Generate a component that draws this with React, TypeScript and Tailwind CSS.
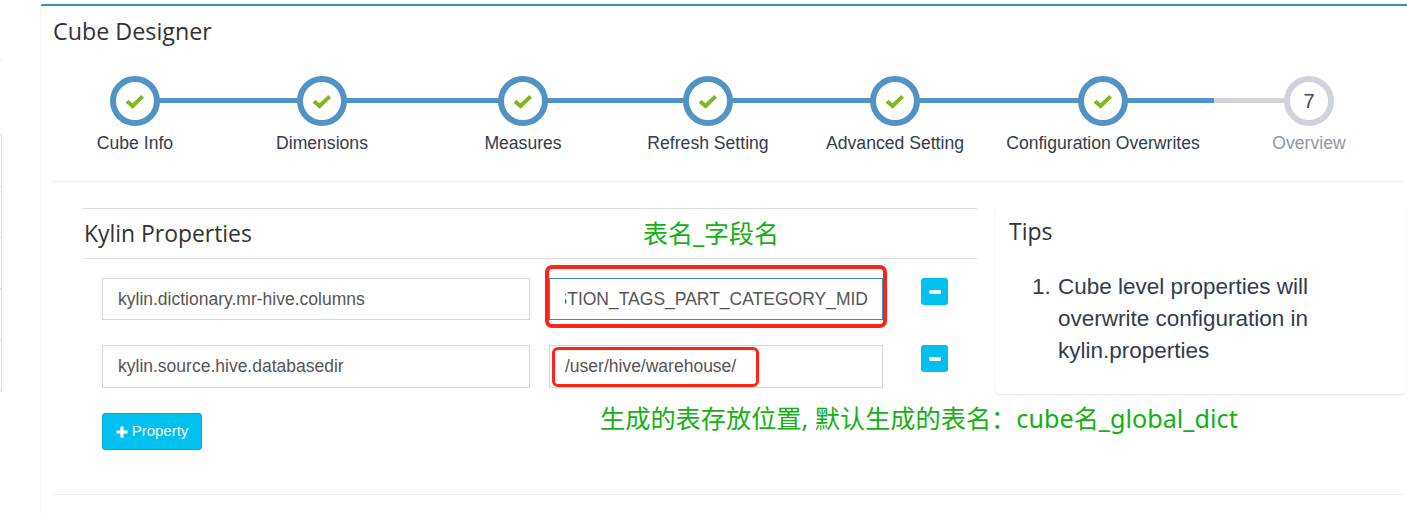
import React from "react";

const arial = "font-['Liberation_Sans',Arial,sans-serif]";
const heading = "font-['Open_Sans','Noto_Sans',sans-serif]";
const cjk = "font-['Noto_Sans','Noto_Sans_CJK_SC',sans-serif]";

const steps = [
  { label: "Cube Info", width: "w-[188px]" },
  { label: "Dimensions", width: "w-[186px]" },
  { label: "Measures", width: "w-[216px]" },
  { label: "Refresh Setting", width: "w-[154px]" },
  { label: "Advanced Setting", width: "w-[220px]" },
  { label: "Configuration Overwrites", width: "w-[196px]" },
];

const CheckMark = () => (
  <svg width="20" height="16" viewBox="0 0 20 16">
    <path d="M2 8.2 L7.6 13 L17.6 3.4" fill="none" stroke="#7fb71e" strokeWidth="4" />
  </svg>
);

const Step = ({ label, width }: { label: string; width: string }) => (
  <div className={`${width} shrink-0 flex flex-col items-center relative`}>
    <div className="w-[50px] h-[50px] rounded-full border-[6px] border-[#5093c4] bg-white flex items-center justify-center">
      <CheckMark />
    </div>
    <div className={`mt-[5px] h-[24px] leading-[24px] text-[17.6px] whitespace-nowrap text-[#333c4e] ${arial}`}>{label}</div>
  </div>
);

const MinusButton = () => (
  <button className="w-[27px] h-[27px] rounded-[3px] bg-[#00c0ef] flex items-center justify-center shrink-0">
    <span className="block w-[12px] h-[4px] rounded-[1px] bg-white" />
  </button>
);

export default function App() {
  return (
    <div className="relative flex w-[1407px] h-[514px] overflow-hidden bg-white">
      {/* what is left of the sidebar table */}
      <div className="w-[40px] shrink-0">
        <div className="w-[2px] mt-[59px] h-px bg-[#eeeeee]" />
        <div className="w-[2px] mt-[74px] h-[258px] border-r border-[#dddddd] flex flex-col">
          <div className="h-[52px] border-t border-[#dddddd]" />
          <div className="h-[51px] border-t border-[#dddddd]" />
          <div className="h-[51px] border-t border-[#dddddd]" />
          <div className="h-[51px] border-t border-[#dddddd]" />
          <div className="h-[52px] border-t border-b border-[#dddddd]" />
        </div>
      </div>

      <div className="flex-1 mt-[4px] border-t-2 border-l border-t-[#3c8dbc] border-l-[#f4f4f4] rounded-tl-[3px] min-w-0">
        <h1 className={`ml-[12px] h-[50px] leading-[50px] text-[23.3px] text-[#333333] ${heading}`}>Cube Designer</h1>

        <div className="relative flex mt-[20px]">
          <div className="absolute left-[94px] top-[22px] w-[1079px] h-[5px] bg-[#5093c4]" />
          <div className="absolute left-[1173px] top-[22px] w-[95px] h-[5px] bg-[#d0d3d9]" />
          {steps.map((s) => (
            <Step key={s.label} label={s.label} width={s.width} />
          ))}
          <div className="w-[216px] shrink-0 flex flex-col items-center relative">
            <div className={`w-[50px] h-[50px] rounded-full border-[6px] border-[#d0d3d9] bg-white flex items-center justify-center text-[20px] text-[#3f4a5c] ${arial}`}>7</div>
            <div className={`mt-[5px] h-[24px] leading-[24px] text-[17.6px] text-[#8f98a3] ${arial}`}>Overview</div>
          </div>
        </div>

        <div className="mt-[26px] ml-[11px] mr-[2px] h-px bg-[#eeeeee]" />

        <div className="flex mt-[26px] h-[286px]">
          <div className="ml-[42px] w-[894px] shrink-0">
            <div className="h-[51px] border-t border-b border-[#dddddd] flex items-center pl-px pt-[2px]">
              <h2 className={`text-[22.9px] text-[#333333] ${heading}`}>Kylin Properties</h2>
            </div>

            <div className={`mt-[19px] ml-[19px] flex flex-col gap-[25px] text-[17.5px] text-[#555555] ${arial}`}>
              <div className="flex items-start h-[42px]">
                <div className="w-[428px] h-[42px] border border-[#d2d6de] pl-[15px] pt-px flex items-center whitespace-nowrap">kylin.dictionary.mr-hive.columns</div>
                <div className="ml-[19px] w-[334px] h-[42px] border border-[#3c8dbc] pl-[15px] pr-[14px] pt-px flex items-center">
                  <div className="w-full overflow-hidden flex justify-end whitespace-nowrap">QUESTION_TAGS_PART_CATEGORY_MID</div>
                </div>
                <div className="ml-[38px]"><MinusButton /></div>
              </div>
              <div className="flex items-start h-[43px]">
                <div className="w-[428px] h-[43px] border border-[#d2d6de] pl-[15px] flex items-center whitespace-nowrap">kylin.source.hive.databasedir</div>
                <div className="ml-[19px] w-[334px] h-[43px] border border-[#d2d6de] pl-[15px] flex items-center whitespace-nowrap">/user/hive/warehouse/</div>
                <div className="ml-[38px]"><MinusButton /></div>
              </div>
            </div>

            <button className={`mt-[25px] ml-[19px] w-[100px] h-[37px] rounded-[3px] bg-[#00c0ef] border border-[#00acd6] text-white text-[15px] flex items-center justify-center gap-[4px] ${arial}`}>
              <svg width="12" height="12" viewBox="0 0 12 12">
                <path d="M4.4 0.5 H7.6 V4.4 H11.5 V7.6 H7.6 V11.5 H4.4 V7.6 H0.5 V4.4 H4.4 Z" fill="white" />
              </svg>
              Property
            </button>
          </div>

          <div className="ml-[18px] w-[410px] h-[186px] shrink-0 rounded-[4px] bg-white shadow-[0_1px_2px_rgba(0,0,0,0.1)] pl-[14px] pt-[7px]">
            <h3 className={`h-[32px] leading-[32px] text-[23px] text-[#333333] ${heading}`}>Tips</h3>
            <ol className={`mt-[24px] ml-[48px] w-[262px] list-decimal text-[22.5px] leading-[32px] text-[#333c4e] ${arial}`}>
              <li className="pl-[1px]">Cube level properties will overwrite configuration in kylin.properties</li>
            </ol>
          </div>
        </div>

        <div className="ml-[11px] mr-[2px] h-px bg-[#eeeeee]" />
      </div>

      {/* annotations drawn over the screenshot */}
      <div className="absolute left-[545px] top-[265px] w-[342px] h-[63px] border-4 border-[#ff2418] rounded-[7px]" />
      <div className="absolute left-[552px] top-[347px] w-[207px] h-[40px] border-[3px] border-[#ff2418] rounded-[6px]" />
      <div className={`absolute left-[643px] top-[215px] text-[25px] leading-[36px] whitespace-nowrap text-[#14b014] ${cjk}`}>表名_字段名</div>
      <div className={`absolute left-[600px] top-[400px] text-[25.2px] leading-[36px] whitespace-nowrap text-[#14b014] ${cjk}`}>生成的表存放位置, 默认生成的表名：cube名_global_dict</div>
    </div>
  );
}
